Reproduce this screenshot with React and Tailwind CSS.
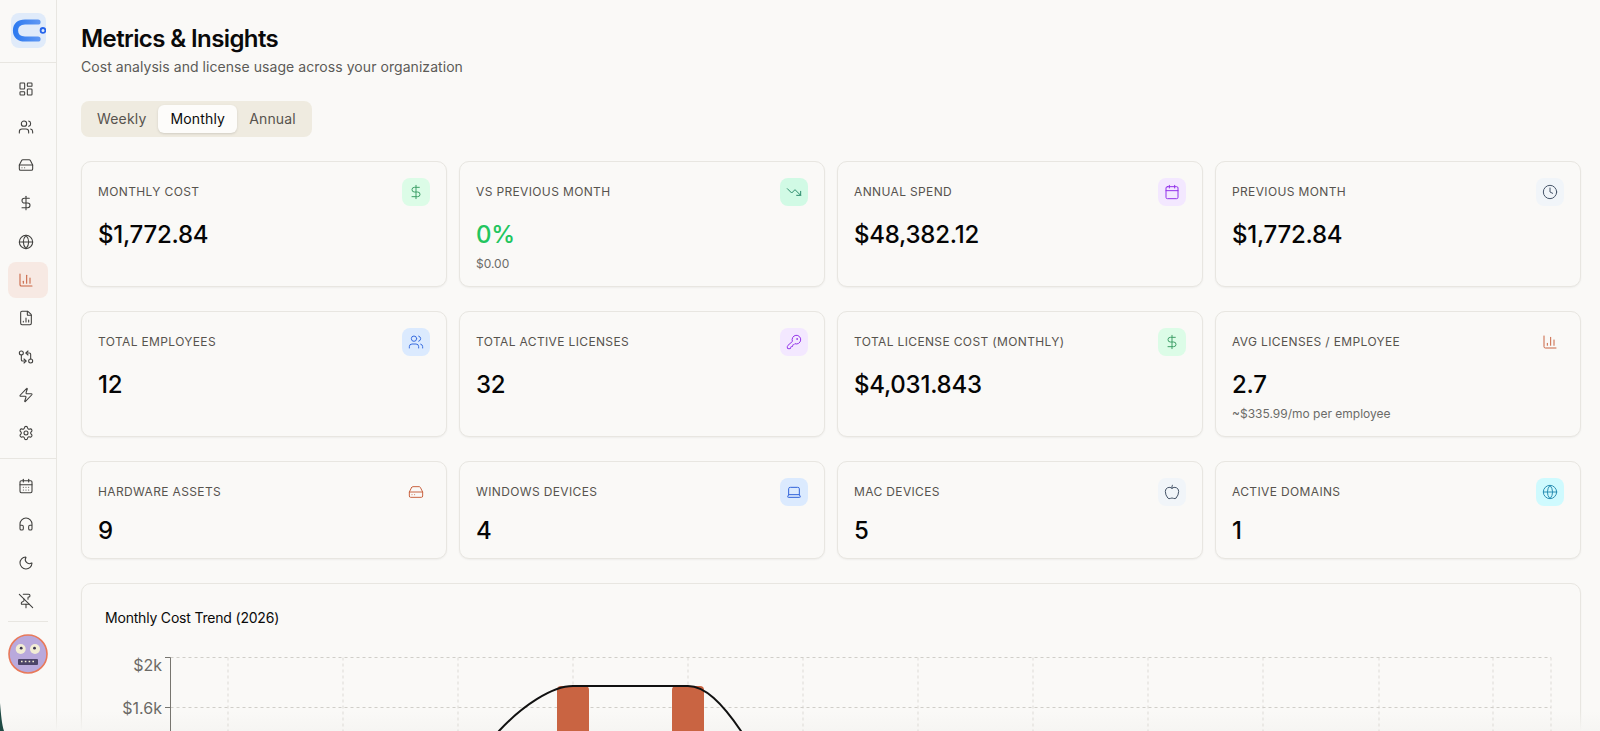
import {
  Apple,
  Calendar,
  CalendarDays,
  ChartColumn,
  Clock,
  DollarSign,
  FileChartColumn,
  GitCompareArrows,
  Globe,
  HardDrive,
  Headphones,
  KeyRound,
  Laptop,
  LayoutDashboard,
  Moon,
  PinOff,
  Settings,
  TrendingDown,
  Users,
  Zap,
} from 'lucide-react'

const mainNav = [
  { icon: LayoutDashboard },
  { icon: Users },
  { icon: HardDrive },
  { icon: DollarSign },
  { icon: Globe },
  { icon: ChartColumn, active: true },
  { icon: FileChartColumn },
  { icon: GitCompareArrows },
  { icon: Zap },
  { icon: Settings },
]

const bottomNav = [{ icon: CalendarDays }, { icon: Headphones }, { icon: Moon }, { icon: PinOff }]

const row1 = [
  { label: 'Monthly Cost', value: '$1,772.84', icon: DollarSign, box: 'bg-[#dcfce7] text-[#3f9f68]' },
  { label: 'vs Previous Month', value: '0%', sub: '$0.00', green: true, icon: TrendingDown, box: 'bg-[#d1fae5] text-[#2b8a6b]' },
  { label: 'Annual Spend', value: '$48,382.12', icon: Calendar, box: 'bg-[#f3e8ff] text-[#9333ea]' },
  { label: 'Previous Month', value: '$1,772.84', icon: Clock, box: 'bg-[#f1f5f9] text-[#475569]' },
]

const row2 = [
  { label: 'Total Employees', value: '12', icon: Users, box: 'bg-[#dbeafe] text-[#3b6fe0]' },
  { label: 'Total Active Licenses', value: '32', icon: KeyRound, box: 'bg-[#f3e8ff] text-[#9333ea]' },
  { label: 'Total License Cost (Monthly)', value: '$4,031.843', icon: DollarSign, box: 'bg-[#dcfce7] text-[#3f9f68]' },
  { label: 'Avg Licenses / Employee', value: '2.7', sub: '~$335.99/mo per employee', icon: ChartColumn, box: 'text-[#c96442]' },
]

const row3 = [
  { label: 'Hardware Assets', value: '9', icon: HardDrive, box: 'text-[#c96442]' },
  { label: 'Windows Devices', value: '4', icon: Laptop, box: 'bg-[#dbeafe] text-[#2f62d9]' },
  { label: 'Mac Devices', value: '5', icon: Apple, box: 'bg-[#f1f5f9] text-[#475569]' },
  { label: 'Active Domains', value: '1', icon: Globe, box: 'bg-[#cffafe] text-[#2b8fb3]' },
]

const NavItem = ({ icon: Icon, active }) => (
  <div className={`flex h-9 w-10 items-center rounded-lg pl-2.5 ${active ? 'bg-[#f7e9e3] text-[#c96442]' : 'text-[#3f3f3d]'}`}>
    <Icon size={16} strokeWidth={1.6} />
  </div>
)

const StatCard = ({ label, value, sub, green, icon: Icon, box, compact }) => (
  <div className="rounded-[10px] border border-[#e8e6e1] bg-[#faf9f7] px-4 pt-4 shadow-[0_1px_2px_rgba(0,0,0,0.05)]">
    <div className="flex items-center justify-between">
      <span className="text-xs font-normal uppercase tracking-[0.03em] text-[#57534e]">{label}</span>
      <span className={`flex h-7 w-7 items-center justify-center rounded-lg ${box}`}>
        <Icon size={16} strokeWidth={1.5} />
      </span>
    </div>
    <div className={`${compact ? 'mt-[9px]' : 'mt-[13px]'} text-2xl font-medium tracking-[-0.01em] ${green ? 'text-[#22c55e]' : 'text-[#050505]'}`}>{value}</div>
    {sub && <div className="mt-[5px] text-xs text-[#6b6b68]">{sub}</div>}
  </div>
)

const Logo = () => (
  <div className="mx-auto mt-[13px] flex h-[35px] w-[35px] items-center justify-center rounded-lg bg-[#e0ebfa]">
    <svg width="35" height="35" viewBox="0 0 35 35" fill="none">
      <defs>
        <linearGradient id="logoStroke" x1="0" y1="0" x2="1" y2="0">
          <stop offset="0" stopColor="#2f7bf0" />
          <stop offset="1" stopColor="#5b95f3" />
        </linearGradient>
      </defs>
      <path d="M27 9 H14 C8 9 4.5 12 4.5 17.5 C4.5 23 8 26 14 26 H27" stroke="url(#logoStroke)" strokeWidth="5.2" strokeLinecap="round" />
      <circle cx="32" cy="17.4" r="2.4" fill="#e0ebfa" stroke="#2563eb" strokeWidth="1.8" />
    </svg>
  </div>
)

const Avatar = () => (
  <svg width="40" height="40" viewBox="0 0 40 40" className="shrink-0">
    <circle cx="20" cy="20" r="19" fill="#b9a9dc" stroke="#e8795a" strokeWidth="1.6" />
    <circle cx="12.7" cy="15" r="5" fill="#f2edd5" />
    <circle cx="27" cy="15" r="5" fill="#f2edd5" />
    <circle cx="13.2" cy="14.2" r="1.4" fill="#3a3450" />
    <circle cx="26.5" cy="14.2" r="1.4" fill="#3a3450" />
    <rect x="10" y="25" width="20" height="6" rx="1" fill="#4c4468" />
    <path d="M13 27.5 H27" stroke="#f2edd5" strokeWidth="1.6" strokeDasharray="1.6 2.2" />
  </svg>
)

const gridX = [228, 343, 458, 573, 688, 803, 918, 1033, 1148, 1263, 1379, 1493, 1551]

const TrendChart = () => (
  <svg className="relative z-10 mt-6 block" width="1451" height="120" viewBox="105 652 1451 120" fill="none">
    {gridX.map((x) => (
      <line key={x} x1={x} y1="657.5" x2={x} y2="772" stroke="#dddbd6" strokeDasharray="3 3" />
    ))}
    <line x1="170.5" y1="657.5" x2="1551" y2="657.5" stroke="#d0cec9" strokeDasharray="3 3" />
    <line x1="170.5" y1="707.5" x2="1551" y2="707.5" stroke="#d0cec9" strokeDasharray="3 3" />
    <path d="M170.5 657.5 V772" stroke="#77756f" />
    <path d="M165 657.5 H170.5 M165 707.5 H170.5" stroke="#77756f" />
    <text x="162" y="671" textAnchor="end" fontSize="16" fill="#6b6a66">$2k</text>
    <text x="162" y="714" textAnchor="end" fontSize="16" fill="#6b6a66">$1.6k</text>
    <path d="M557 772 V690 a4 4 0 0 1 4 -4 H585 a4 4 0 0 1 4 4 V772 Z" fill="#c96442" />
    <path d="M672 772 V690 a4 4 0 0 1 4 -4 H700 a4 4 0 0 1 4 4 V772 Z" fill="#c96442" />
    <path
      d="M472 764 L499 731 C522 706 552 686 573 686 H688 C705 686 722 703 741 731 C748 742 754 756 760 772"
      stroke="#111"
      strokeWidth="2"
    />
  </svg>
)

const App = () => {
  return (
    <div className="relative flex h-screen overflow-hidden bg-[#faf9f7] font-['Inter',sans-serif] text-[#0a0a0a]">
      {/* Sidebar */}
      <aside className="flex w-[57px] shrink-0 flex-col border-r border-[#e8e6e1]">
        <div className="h-[63px] border-b border-[#e8e6e1]">
          <Logo />
        </div>
        <nav className="flex flex-col gap-[2.33px] px-2 pb-[6.5px] pt-[7.5px]">
          {mainNav.map((item, i) => (
            <NavItem key={i} {...item} />
          ))}
        </nav>
        <div className="flex flex-col gap-[2.5px] border-t border-[#e8e6e1] px-2 pt-[9px]">
          {bottomNav.map((item, i) => (
            <NavItem key={i} {...item} />
          ))}
        </div>
        <div className="mx-2 mt-[2px] border-t border-[#e8e6e1]" />
        <div className="mt-3 px-2">
          <Avatar />
        </div>
      </aside>

      {/* Main Content */}
      <main className="min-w-0 flex-1 pl-6 pr-[19px] pt-[23px]">
        <h1 className="text-2xl font-semibold tracking-tight">Metrics &amp; Insights</h1>
        <p className="mt-[2px] text-sm tracking-[0.004em] text-[#5c5b57]">Cost analysis and license usage across your organization</p>

        <div className="mt-6 inline-flex rounded-lg bg-[#efebe0] p-1 text-sm tracking-[0.012em] text-[#57534e]">
          <button className="h-7 rounded-md px-3">Weekly</button>
          <button className="h-7 rounded-md bg-[#fdfcfa] px-3 text-[#0a0a0a] shadow-sm">Monthly</button>
          <button className="h-7 rounded-md px-3">Annual</button>
        </div>

        <div className="mt-6 grid grid-cols-4 gap-x-3 gap-y-6">
          {row1.map((card) => (
            <div key={card.label} className="grid h-[126px]">
              <StatCard {...card} />
            </div>
          ))}
          {row2.map((card) => (
            <div key={card.label} className="grid h-[126px]">
              <StatCard {...card} />
            </div>
          ))}
          {row3.map((card) => (
            <div key={card.label} className="grid h-[98px]">
              <StatCard {...card} compact />
            </div>
          ))}
        </div>

        <div className="mt-6 rounded-[10px] border border-[#e8e6e1] bg-[#faf9f7] py-6 pl-[23px] pr-6 shadow-[0_1px_2px_rgba(0,0,0,0.05)]">
          <h2 className="text-sm font-normal tracking-[-0.014em]">Monthly Cost Trend (2026)</h2>
          <TrendChart />
        </div>
      </main>

      {/* fade at the bottom edge and window corner */}
      <div className="pointer-events-none absolute inset-x-0 bottom-0 h-5 bg-gradient-to-b from-transparent to-[#f6f5f3]" />
      <svg className="pointer-events-none absolute bottom-0 left-0 z-20" width="6" height="28" viewBox="0 0 6 28">
        <path d="M0 0 C1 12 2 22 4 28 L0 28 Z" fill="#1f4a44" />
      </svg>
    </div>
  )
}

export default App
